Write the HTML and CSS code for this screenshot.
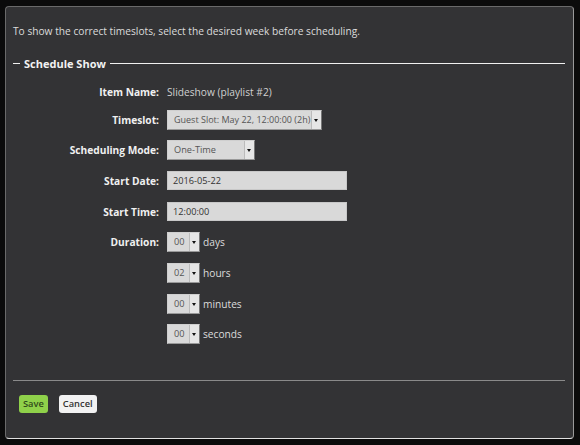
FILE: index.html
```html
<!DOCTYPE html>
<html>
<head>
<meta charset="utf-8">
<link rel="stylesheet" href="styles.css">
</head>
<body>
<div class="modal">
  <p class="intro">To show the correct timeslots, select the desired week before scheduling.</p>
  <fieldset class="box">
    <legend class="legend">Schedule Show</legend>
    <div class="form">
      <div class="label">Item Name:</div>
      <div class="value value-text"><span class="plain">Slideshow (playlist #2)</span></div>

      <div class="label">Timeslot:</div>
      <div class="value"><div class="select sel-slot"><span class="sel-text">Guest Slot: May 22, 12:00:00 (2h)</span><span class="arrow"></span></div></div>

      <div class="label">Scheduling Mode:</div>
      <div class="value"><div class="select sel-mode"><span class="sel-text">One-Time</span><span class="arrow"></span></div></div>

      <div class="label">Start Date:</div>
      <div class="value"><div class="input">2016-05-22</div></div>

      <div class="label">Start Time:</div>
      <div class="value"><div class="input">12:00:00</div></div>

      <div class="label">Duration:</div>
      <div class="value"><div class="select sel-small"><span class="sel-text">00</span><span class="arrow"></span></div><span class="unit">days</span></div>

      <div class="label"></div>
      <div class="value"><div class="select sel-small"><span class="sel-text">02</span><span class="arrow"></span></div><span class="unit">hours</span></div>

      <div class="label"></div>
      <div class="value"><div class="select sel-small"><span class="sel-text">00</span><span class="arrow"></span></div><span class="unit">minutes</span></div>

      <div class="label"></div>
      <div class="value"><div class="select sel-small"><span class="sel-text">00</span><span class="arrow"></span></div><span class="unit">seconds</span></div>
    </div>
  </fieldset>
  <div class="footer">
    <button class="btn btn-save">Save</button>
    <button class="btn btn-cancel">Cancel</button>
  </div>
</div>
</body>
</html>
```
FILE: styles.css
```css
html, body {
  margin: 0;
  padding: 0;
  background: #0b0b0b;
  height: 100%;
}
body {
  padding: 6px 0 0 5px;
  box-sizing: border-box;
  font-family: "Open Sans", "Liberation Sans", sans-serif;
  font-size: 10.2px;
  color: #dcdcdc;
}
.modal {
  width: 569px;
  height: 433px;
  box-sizing: border-box;
  background: #333335;
  border: 1px solid #6a6a6a;
  border-right-color: #9a9a9a;
  border-bottom-color: #e0e0e0;
  border-radius: 4px;
  padding: 17px 8px 0 7px;
  display: flex;
  flex-direction: column;
}
.intro {
  margin: 0;
  line-height: 15px;
}
.box {
  margin: 17px 0 0 0;
  padding: 0;
  border: 0;
  border-top: 1px solid #f0f0f0;
  min-width: 0;
}
.legend {
  padding: 0 4px;
  margin-left: 7px;
  font-size: 11px;
  font-weight: 700;
  color: #f2f2f2;
}
.form {
  margin-top: 14px;
  display: grid;
  grid-template-columns: 146px 1fr;
  column-gap: 8px;
  row-gap: 10.67px;
  align-items: center;
}
.label {
  text-align: right;
  font-weight: 700;
  color: #f0f0f0;
  line-height: 14px;
}
.value {
  display: flex;
  align-items: center;
  min-height: 20px;
}
.value-text {
  min-height: 14px;
}
.plain {
  color: #d0d0d0;
}
.select {
  display: flex;
  height: 20px;
  box-sizing: border-box;
  background: #d9d9d9;
  border: 1px solid #cfcfcf;
  border-right-color: #777;
  border-bottom-color: #999;
}
.sel-text {
  flex: 1;
  padding-left: 6px;
  line-height: 18px;
  color: #555;
  font-size: 9.2px;
  white-space: nowrap;
  overflow: hidden;
}
.sel-slot .sel-text {
  font-size: 9px;
  padding-left: 6px;
}
.arrow {
  width: 9px;
  flex: none;
  background: #e6e6e6;
  border-left: 1px solid #bbb;
  position: relative;
}
.arrow::after {
  content: "";
  position: absolute;
  left: 2px;
  top: 8px;
  border-left: 2.5px solid transparent;
  border-right: 2.5px solid transparent;
  border-top: 3px solid #111;
}
.sel-slot { width: 155px; }
.sel-mode { width: 88px; }
.sel-small { width: 33px; }
.input {
  width: 180px;
  height: 19px;
  box-sizing: border-box;
  background: #d9d9d9;
  border: 1px solid #c8c8c8;
  color: #333;
  font-size: 9.2px;
  line-height: 17px;
  padding-left: 5px;
}
.unit {
  margin-left: 3px;
  color: #dcdcdc;
}
.footer {
  margin-top: auto;
  margin-bottom: 25px;
  border-top: 1px solid #8a8a8a;
  padding: 14px 0 0 6px;
  display: flex;
  gap: 11px;
}
.btn {
  font-family: "Open Sans", "Liberation Sans", sans-serif;
  font-size: 9.3px;
  font-weight: 600;
  height: 18px;
  padding: 0 4px;
  border: 0;
  border-radius: 3px;
  line-height: 18px;
}
.btn-save {
  background: #8fd14a;
  color: #2f4a1a;
}
.btn-cancel {
  background: #f2f2f2;
  color: #333;
}
```
